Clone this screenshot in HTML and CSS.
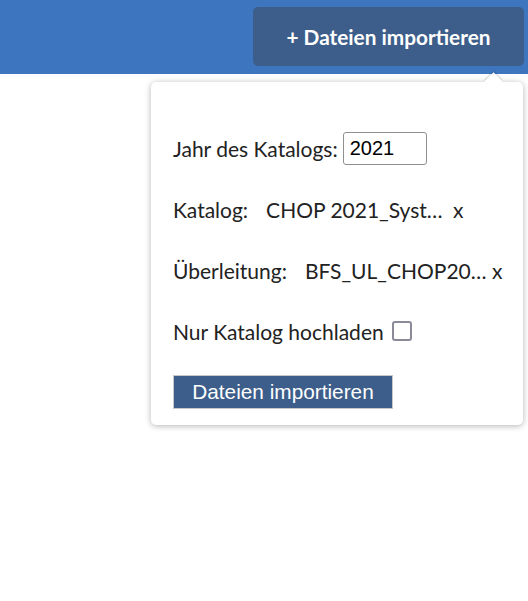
FILE: index.html
```html
<!DOCTYPE html>
<html lang="de">
<head>
<meta charset="utf-8">
<title>Dateien importieren</title>
<link rel="stylesheet" href="styles.css">
</head>
<body>
<header class="topbar">
  <button class="import-toggle" type="button">+ Dateien importieren</button>
</header>
<div class="popover">
  <div class="popover-arrow"></div>
  <div class="popover-body">
    <div class="row">
      <label class="label" for="jahr">Jahr des Katalogs:</label>
      <input id="jahr" class="year-input" type="text" value="2021">
    </div>
    <div class="row">
      <span class="label">Katalog:</span>
      <span class="file-name">CHOP 2021_Syst…</span>
      <span class="remove">x</span>
    </div>
    <div class="row">
      <span class="label">Überleitung:</span>
      <span class="file-name">BFS_UL_CHOP20…</span>
      <span class="remove">x</span>
    </div>
    <div class="row">
      <span class="label">Nur Katalog hochladen</span>
      <span class="checkbox"></span>
    </div>
    <div class="row">
      <button class="submit" type="button">Dateien importieren</button>
    </div>
  </div>
</div>
</body>
</html>
```

FILE: styles.css
```css
html, body {
  margin: 0;
  padding: 0;
  background: #ffffff;
}
body {
  font-family: "Lato", "Open Sans", sans-serif;
  color: #222222;
  width: 528px;
  height: 601px;
  position: relative;
  overflow: hidden;
}
.topbar {
  height: 74px;
  background: #3d75bf;
  display: flex;
  justify-content: flex-end;
  align-items: flex-start;
  padding: 7px 4px 0 0;
  box-sizing: border-box;
}
.import-toggle {
  width: 271px;
  height: 59px;
  border: none;
  border-radius: 5px;
  background: #3d5e8a;
  color: #ffffff;
  font-family: "Lato", sans-serif;
  font-weight: bold;
  font-size: 20.8px;
  padding: 0;
  cursor: pointer;
}
.popover {
  position: absolute;
  left: 151px;
  top: 82px;
  width: 372px;
  height: 343px;
  background: #ffffff;
  border-radius: 5px;
  box-shadow: 0 1px 6px rgba(0, 0, 0, 0.3);
  box-sizing: border-box;
}
.popover-arrow {
  position: absolute;
  top: -7px;
  left: 336px;
  width: 13px;
  height: 13px;
  background: #ffffff;
  transform: rotate(45deg);
  box-shadow: -1px -1px 2px rgba(0, 0, 0, 0.18);
}
.popover-body {
  position: relative;
  padding: 49px 0 0 22px;
  display: flex;
  flex-direction: column;
  gap: 27px;
}
.row {
  height: 34px;
  display: flex;
  align-items: center;
  font-size: 21px;
  white-space: nowrap;
}
.year-input {
  margin-left: 5px;
  width: 84px;
  height: 33px;
  box-sizing: border-box;
  border: 1px solid #8f8f8f;
  border-radius: 3px;
  padding: 0 6px;
  font-family: "Liberation Sans", Arial, sans-serif;
  font-size: 20px;
  color: #000000;
}
.file-name {
  margin-left: 18px;
  width: 184px;
}
.remove {
  margin-left: 3px;
}
.checkbox {
  margin-left: 8px;
  width: 20px;
  height: 20px;
  box-sizing: border-box;
  border: 2px solid #8a8a98;
  border-radius: 3px;
}
.submit {
  width: 220px;
  height: 34px;
  box-sizing: border-box;
  background: #3d5e8a;
  border: 1px solid #c9c9c9;
  color: #ffffff;
  font-family: "Liberation Sans", Arial, sans-serif;
  font-size: 20.8px;
  padding: 0;
  cursor: pointer;
}
```
